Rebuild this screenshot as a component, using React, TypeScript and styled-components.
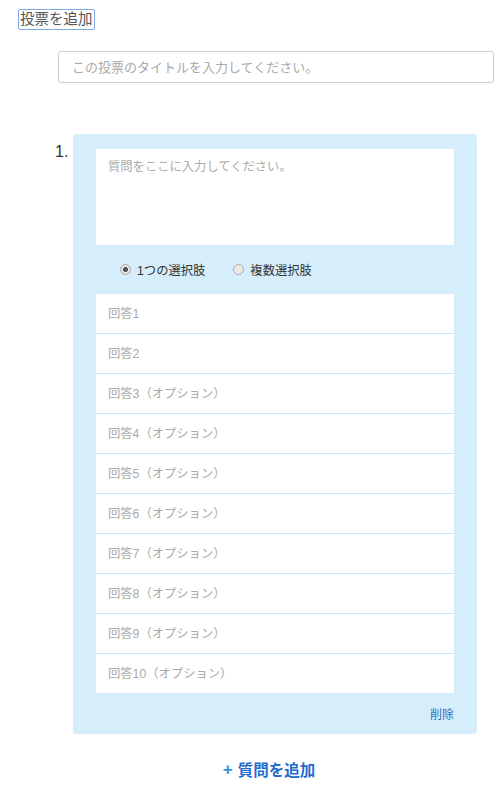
import React from 'react';
import styled, { createGlobalStyle } from 'styled-components';

const Global = createGlobalStyle`
	body {
		margin: 0;
		background: #fff;
		font-family: "Liberation Sans", "Noto Sans CJK JP", sans-serif;
	}
	* { box-sizing: border-box; }
`;

const Page = styled.div`
	width: 500px;
	padding: 9px 6px 0 18px;
`;

const AddPollButton = styled.button`
	display: block;
	height: 21px;
	padding: 0 1px;
	border: 1px solid #7fa9e5;
	border-radius: 2px;
	background: #fff;
	color: #555;
	font-family: inherit;
	font-size: 14.5px;
	line-height: 19px;
`;

const TitleInput = styled.input`
	display: block;
	width: 436px;
	height: 32px;
	margin: 21px 0 0 40px;
	padding: 0 13px;
	border: 1px solid #ccc;
	border-radius: 3px;
	font-family: inherit;
	font-size: 13px;
	&::placeholder { color: #aaa; }
`;

const QuestionRow = styled.div`
	display: flex;
	margin: 51px 0 0 37px;
`;

const Number = styled.div`
	width: 18px;
	padding-top: 9px;
	font-size: 16px;
	color: #333;
`;

const Card = styled.div`
	width: 404px;
	padding: 15px 23px 0;
	background: #d6edfb;
	border-radius: 3px;
`;

const QuestionText = styled.textarea`
	display: block;
	width: 100%;
	height: 96px;
	padding: 8px 12px;
	border: none;
	resize: none;
	font-family: inherit;
	font-size: 12.3px;
	&::placeholder { color: #aaa; }
`;

const Choices = styled.div`
	display: flex;
	align-items: center;
	gap: 28px;
	height: 49px;
	padding-left: 24px;
`;

const Choice = styled.label`
	display: flex;
	align-items: center;
	gap: 6px;
	font-size: 12.3px;
	color: #333;
`;

const Radio = styled.span<{ $checked?: boolean }>`
	width: 11px;
	height: 11px;
	border-radius: 50%;
	border: 1px solid #a9a9a9;
	background: ${p => (p.$checked ? 'radial-gradient(circle, #555 0 2.2px, #e6e6e6 2.8px)' : '#e9e9e9')};
`;

const Answers = styled.div`
	display: flex;
	flex-direction: column;
	gap: 1px;
	background: #c9e5f8;
`;

const Answer = styled.input`
	display: block;
	width: 100%;
	height: 39px;
	padding: 0 12px;
	border: none;
	font-family: inherit;
	font-size: 12.3px;
	&::placeholder { color: #aaa; }
`;

const Footer = styled.div`
	display: flex;
	justify-content: flex-end;
	align-items: center;
	height: 41px;
`;

const DeleteLink = styled.span`
	font-size: 12px;
	color: #2c6fbf;
`;

const AddQuestion = styled.div`
	display: flex;
	justify-content: center;
	align-items: center;
	gap: 5px;
	margin: 24px 0 0 26px;
	font-size: 15.5px;
	font-weight: bold;
	color: #1f6ccc;
`;

const Plus = styled.span`
	font-size: 17px;
	line-height: 1;
	color: #3a8ee0;
`;

const answers = Array.from({ length: 10 }, (_, i) =>
	i < 2 ? `回答${i + 1}` : `回答${i + 1}（オプション）`
);

const App = () => {
	return (
		<Page>
			<Global />
			<AddPollButton>投票を追加</AddPollButton>
			<TitleInput placeholder="この投票のタイトルを入力してください。" />
			<QuestionRow>
				<Number>1.</Number>
				<Card>
					<QuestionText placeholder="質問をここに入力してください。" />
					<Choices>
						<Choice><Radio $checked />1つの選択肢</Choice>
						<Choice><Radio />複数選択肢</Choice>
					</Choices>
					<Answers>
						{answers.map(a => <Answer key={a} placeholder={a} />)}
					</Answers>
					<Footer>
						<DeleteLink>削除</DeleteLink>
					</Footer>
				</Card>
			</QuestionRow>
			<AddQuestion><Plus>+</Plus>質問を追加</AddQuestion>
		</Page>
	);
};

export default App;
